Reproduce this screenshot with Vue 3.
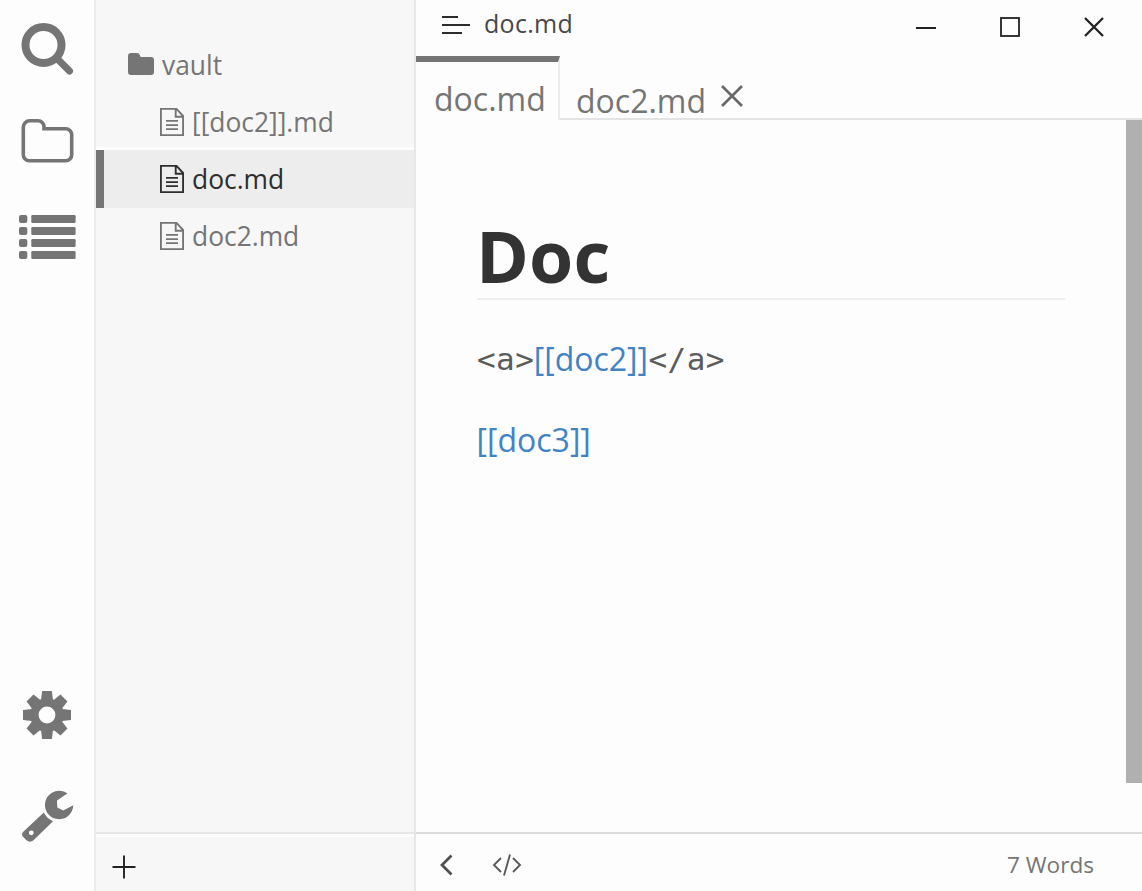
<script setup>
const files = [
  { name: '[[doc2]].md', active: false },
  { name: 'doc.md', active: true },
  { name: 'doc2.md', active: false },
]
const teeth = [0, 45, 90, 135, 180, 225, 270, 315]
</script>

<template>
  <div class="app">
    <nav class="rail">
      <svg class="i-search" width="56" height="56" viewBox="0 0 56 56">
        <circle cx="24.5" cy="24" r="18" fill="none" stroke="#757575" stroke-width="8" />
        <path d="M38 37.5L50.5 50" stroke="#757575" stroke-width="7" stroke-linecap="round" />
      </svg>
      <svg class="i-folder" width="56" height="48" viewBox="0 0 56 48">
        <path d="M4.3 10.3a6.5 6.5 0 0 1 6.5-6.5h8.2a6 6 0 0 1 6 6v2H46.7a6 6 0 0 1 6 6v20a6 6 0 0 1-6 6h-36.4a6 6 0 0 1-6-6z" fill="none" stroke="#757575" stroke-width="3.6" />
      </svg>
      <svg class="i-list" width="57" height="45" viewBox="0 0 57 45" fill="#757575">
        <template v-for="n in 4" :key="n">
          <rect x="0" :y="(n - 1) * 12" width="8.3" height="8" rx="2" />
          <rect x="12.3" :y="(n - 1) * 12" width="44.3" height="8" rx="1.2" />
        </template>
      </svg>
      <span class="spring"></span>
      <svg class="i-gear" width="50" height="50" viewBox="-25 -25 50 50" fill="#757575">
        <path v-for="a in teeth" :key="a" :transform="`rotate(${a})`" d="M-6-15L-4.9-24H4.9L6-15z" />
        <circle r="12.6" fill="none" stroke="#757575" stroke-width="8.4" />
      </svg>
      <svg class="i-wrench" width="54" height="54" viewBox="0 0 54 54">
        <path d="M46.3 3.4A14.2 14.2 0 1 0 52.3 15.3L42.2 20.4L36.3 17.4L36 10.6z" fill="#757575" />
        <path d="M22.8 22.6Q25.6 28.5 32 31.3L12.5 50.3Q9 53.2 5.5 50.3L2.5 47.3Q-.5 44.5 2.5 41.5z" fill="#757575" />
        <circle cx="10.3" cy="42.8" r="2.4" fill="#fdfdfd" />
      </svg>
    </nav>

    <aside class="side">
      <div class="tree">
        <div class="root">
          <svg width="26" height="23" viewBox="0 0 26 23"><path d="M0 3a3 3 0 0 1 3-3h6q2 0 2.8 2l.8 2H23a3 3 0 0 1 3 3v12a3 3 0 0 1-3 3H3a3 3 0 0 1-3-3z" fill="#757575" /></svg>
          <span class="label">vault</span>
        </div>
        <div v-for="f in files" :key="f.name" class="file" :class="{ active: f.active }">
          <svg width="24" height="28" viewBox="0 0 24 28" fill="none" stroke="currentColor" stroke-width="1.9">
            <path d="M.9.9H16.5L23.1 8V27.1H.9zM15.7 1V8.7H23" />
            <path d="M6 12.9H18M6 17.1H18M6 21.2H18" stroke-width="1.8" />
          </svg>
          <span class="label">{{ f.name }}</span>
        </div>
      </div>
      <div class="sidefoot">
        <svg width="24" height="24" viewBox="0 0 24 24"><path d="M.5 12H23.5M12 .5V23.5" stroke="#222" stroke-width="1.9" /></svg>
      </div>
    </aside>

    <main class="main">
      <header class="title">
        <svg width="29" height="20" viewBox="0 0 29 20"><path d="M1 2H17M1 10H29M1 18H21" stroke="#2d2d2d" stroke-width="1.9" /></svg>
        <span class="titletext">doc.md</span>
        <div class="win">
          <svg width="20" height="22" viewBox="0 0 20 22"><path d="M0 12H20" stroke="#222" stroke-width="2" /></svg>
          <svg width="20" height="22" viewBox="0 0 20 22"><rect x="1" y="2" width="18" height="18" fill="none" stroke="#222" stroke-width="1.8" /></svg>
          <svg width="20" height="22" viewBox="0 0 20 22"><path d="M1 2L19 20M19 2L1 20" stroke="#222" stroke-width="2.3" /></svg>
        </div>
      </header>
      <div class="tabs">
        <div class="tab current"><span>doc.md</span></div>
        <div class="tab other">
          <span>doc2.md</span>
          <svg width="22" height="22" viewBox="0 0 22 22"><path d="M1 1L21 21M21 1L1 21" stroke="#696969" stroke-width="2.7" /></svg>
        </div>
      </div>
      <section class="page">
        <article>
          <h1>Doc</h1>
          <p><span class="tag">&lt;a&gt;</span><a>[[doc2]]</a><span class="tag">&lt;/a&gt;</span></p>
          <p><a>[[doc3]]</a></p>
        </article>
        <div class="scroll"></div>
      </section>
      <footer class="foot">
        <svg class="back" width="14" height="22" viewBox="0 0 14 22"><path d="M11.5 1.5L2 11L11.5 20.5" fill="none" stroke="#505050" stroke-width="2.8" /></svg>
        <svg class="code" width="30" height="22" viewBox="0 0 30 22"><path d="M9 4L2 11L9 18M21 4L28 11L21 18M18 .5L12 21.5" fill="none" stroke="#5a5a5a" stroke-width="1.9" /></svg>
        <span class="words">7 Words</span>
      </footer>
    </main>
  </div>
</template>

<style>
body { margin: 0; overflow: hidden; }
</style>
<style scoped>
.app { display: flex; width: 1142px; height: 891px; overflow: hidden; background: #fdfdfd; font-family: "Open Sans", "Noto Sans", sans-serif; color: #757575; }
svg { display: block; flex: none; }
.rail { box-sizing: border-box; width: 96px; flex: none; border-right: 2px solid #ececec; display: flex; flex-direction: column; align-items: flex-start; padding: 21px 0 47px 19px; }
.i-folder { margin: 40px 0 0 0; }
.i-list { margin-top: 50px; }
.spring { flex: 1; }
.i-gear { margin-left: 3px; }
.i-wrench { margin: 50px 0 0 2px; }
.side { width: 318px; flex: none; background: #f7f7f7; display: flex; flex-direction: column; border-right: 2px solid #e7e7e7; }
.tree { flex: 1; padding-top: 36px; }
.root, .file { display: flex; align-items: center; height: 57px; box-sizing: border-box; font-size: 26.4px; white-space: nowrap; }
.root { padding-left: 32px; gap: 8px; }
.file { padding-left: 64px; gap: 8px; }
.label { line-height: 56px; }
.file.active { background: #ededed; border-left: 8px solid #757575; padding-left: 56px; color: #2e2e2e; height: 58px; margin: 0 0 -1px; box-shadow: 0 -3px 0 #fff; }
.sidefoot { box-sizing: border-box; height: 59px; border-top: 2px solid #e8e8e8; box-shadow: inset 0 3px 0 #fff; padding: 21px 0 0 16px; }
.main { flex: 1; min-width: 0; display: flex; flex-direction: column; }
.title { height: 56px; flex: none; display: flex; padding-left: 25px; box-sizing: border-box; }
.title > svg { margin-top: 15px; }
.titletext { margin-left: 14px; font-size: 25px; letter-spacing: .3px; line-height: 46px; color: #484848; }
.win { display: flex; gap: 64px; margin: 16px 38px 0 auto; }
.tabs { display: flex; height: 64px; flex: none; font-size: 32px; }
.tab { box-sizing: border-box; display: flex; white-space: nowrap; }
.current { width: 144px; border-top: 6px solid #757575; border-right: 2px solid #ececec; padding-left: 18px; line-height: 74px; }
.other { flex: 1; border-bottom: 2px solid #e4e4e4; padding-left: 16px; line-height: 90px; }
.other svg { margin: 29px 0 0 15px; }
.page { flex: 1; display: flex; justify-content: space-between; }
article { width: 588px; padding-left: 61px; font-size: 32px; color: #505050; }
h1 { box-sizing: border-box; height: 100px; margin: 80px 0 34px; border-bottom: 2px solid #eee; font-size: 71.5px; line-height: 111px; letter-spacing: .1px; text-indent: -1px; color: #333; font-weight: 700; }
p { margin: 0 0 32px; line-height: 48px; white-space: nowrap; }
a { color: #4183c4; position: relative; top: 1px; left: -.5px; }
.tag { font-family: "DejaVu Sans Mono", monospace; font-size: 31px; letter-spacing: .4px; color: #5c5c5c; }
.scroll { width: 16px; height: 663px; background: #b0b0b0; }
.foot { box-sizing: border-box; height: 59px; flex: none; border-top: 2px solid #dcdcdc; display: flex; align-items: center; padding: 4px 48px 0 24px; }
.code { margin-left: 38px; }
.words { margin-left: auto; font-size: 22.6px; }
</style>
